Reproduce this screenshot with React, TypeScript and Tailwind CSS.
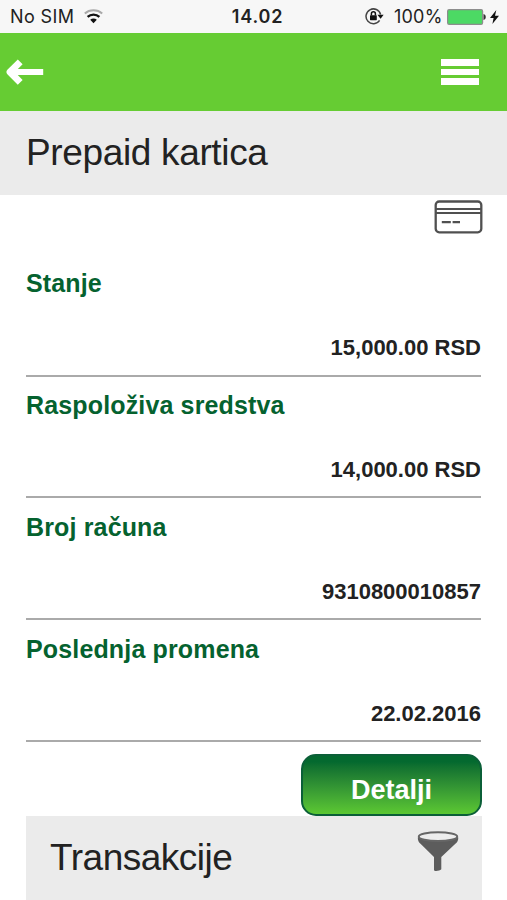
import React from "react";

const rows = [
  { label: "Stanje", value: "15,000.00 RSD" },
  { label: "Raspoloživa sredstva", value: "14,000.00 RSD" },
  { label: "Broj računa", value: "9310800010857" },
  { label: "Poslednja promena", value: "22.02.2016" },
];

function WifiIcon() {
  return (
    <svg width="19" height="15" viewBox="0 0 19 15" fill="none">
      <path d="M.8 4.4C5.6.2 13.4.2 18.2 4.4" stroke="#a9a9a9" strokeWidth="2" />
      <path d="M3.6 7.9C7 4.9 12 4.9 15.4 7.9" stroke="#111" strokeWidth="2.4" />
      <path d="M6.2 10.8c1.9-1.7 4.7-1.7 6.6 0L9.5 14.2z" fill="#111" />
    </svg>
  );
}

function RotationLockIcon() {
  return (
    <svg width="19" height="17" viewBox="0 0 19 17" fill="none">
      <path d="M14.6 12.4A7.4 7.4 0 1 1 15.6 6.5" stroke="#444" strokeWidth="1.5" />
      <path d="M12.4 6.8h6.2l-3 3.9z" fill="#111" />
      <rect x="5" y="7.2" width="6.8" height="5" rx=".6" fill="#111" />
      <path d="M6.4 7.5V5.7a2 2 0 0 1 4 0v1.8" stroke="#111" strokeWidth="1.5" />
    </svg>
  );
}

function StatusBar() {
  return (
    <div className="grid h-[33px] grid-cols-3 items-center bg-[#f7f7f7] pr-2 pl-[10px] font-[Inter,sans-serif] text-[18px] leading-none text-[#222]">
      <div className="flex items-center gap-[10px] pt-px">
        <span className="w-[64px] pt-px whitespace-nowrap tracking-[0.4px]">No SIM</span>
        <WifiIcon />
      </div>
      <div className="pt-[2px] pl-1.5 text-center font-semibold tracking-[0.8px]">14.02</div>
      <div className="flex items-center justify-end pt-px">
        <RotationLockIcon />
        <span className="ml-[10px] w-[49px] pt-px whitespace-nowrap tracking-[0.2px]">100%</span>
        <svg className="ml-[4px]" width="39" height="16" viewBox="0 0 39 16">
          <rect x=".6" y=".6" width="35" height="14.8" rx="1.6" fill="#4cd964" stroke="#8d8d8d" strokeWidth="1.2" />
          <path d="M36.5 5c3 .5 3 5.5 0 6z" fill="#333" />
        </svg>
        <svg className="ml-[4px]" width="9" height="14" viewBox="0 0 9 14">
          <path d="M6.3 0 0 8h3.6L2.4 14 9 5.7H5z" fill="#111" />
        </svg>
      </div>
    </div>
  );
}

function NavBar() {
  return (
    <header className="flex h-[78px] items-center justify-between bg-[#66cc33] pr-[28px] pl-[6px]">
      <svg width="38" height="26" viewBox="0 0 38 26" fill="none" stroke="#fff">
        <path d="M4 13h33.2" strokeWidth="6.2" />
        <path d="M14.2 2.8 4 13l10.2 10.4" strokeWidth="6.8" strokeLinejoin="round" />
      </svg>
      <div className="flex w-[38px] flex-col gap-[3px]">
        <span className="h-[6.5px] bg-white" />
        <span className="h-[6.5px] bg-white" />
        <span className="h-[6.5px] bg-white" />
      </div>
    </header>
  );
}

function CardIcon() {
  return (
    <svg width="50" height="34" viewBox="0 0 50 34" fill="none" stroke="#505050">
      <rect x="1.7" y="1.5" width="45.6" height="30.8" rx="3.5" strokeWidth="2.3" />
      <path d="M2 9h45M2 13h45" strokeWidth="1.8" />
      <path d="M7.8 22.2h9M18.6 22.2h7.4" strokeWidth="2.2" />
    </svg>
  );
}

function FunnelIcon() {
  return (
    <svg width="42" height="41" viewBox="0 0 42 41">
      <path d="M.8 6.5c0 3 .8 4.7 3 6.6L17 26V39c0 1.5 5.5 1.2 7.3-.7V26l13.8-12.9c2.3-2 3.2-3.6 3.2-6.6z" fill="#5c5c5c" />
      <ellipse cx="21" cy="5.7" rx="19.2" ry="4.4" fill="#ededed" stroke="#666" strokeWidth="2" />
    </svg>
  );
}

export default function App() {
  return (
    <div className="flex h-[900px] w-[507px] flex-col overflow-hidden bg-white font-['Liberation_Sans',Arial,sans-serif]">
      <StatusBar />
      <NavBar />
      <div className="h-[84px] bg-[#ebebeb] px-[26px] pt-[21px]">
        <h1 className="text-[37px] leading-[42px] tracking-[-0.35px] text-[#222]">Prepaid kartica</h1>
      </div>
      <div className="flex h-[60px] justify-end pt-[5px] pr-[23px]">
        <CardIcon />
      </div>
      <main className="flex flex-col pr-[26px] pl-[26px]">
        {rows.map((row) => (
          <section key={row.label} className="flex h-[121.8px] flex-col justify-between border-b-2 border-[#aaaaaa] pt-[14.4px] pb-[13.2px] font-bold">
            <h2 className="text-[25px] leading-[29px] tracking-[0.15px] text-[#05622f]">{row.label}</h2>
            <p className="text-right text-[22px] leading-[26px] text-[#222]">{row.value}</p>
          </section>
        ))}
      </main>
      <div className="flex flex-col pr-[25px] pl-[26px]">
        <button className="mt-[12px] h-[62px] w-[181px] self-end rounded-[15px] border-[2.5px] border-[#0b5f38] bg-linear-to-b from-[#04692f] from-10% to-[#5cc832] pt-[10px] text-[27px] leading-[32px] font-bold text-white">
          Detalji
        </button>
        <div className="flex h-[84px] justify-between bg-[#ebebeb] pt-[15px] pr-[23px] pl-[24px]">
          <h2 className="pt-[6px] text-[37px] leading-[42px] tracking-[-0.5px] text-[#222]">Transakcije</h2>
          <FunnelIcon />
        </div>
      </div>
    </div>
  );
}
